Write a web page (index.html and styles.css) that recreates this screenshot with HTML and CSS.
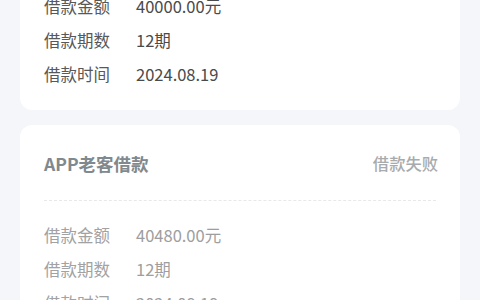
FILE: index.html
```html
<!DOCTYPE html>
<html lang="zh-CN">
<head>
    <meta charset="UTF-8">
    <meta name="viewport" content="width=device-width, initial-scale=1.0">
    <title>借款记录</title>
    <link rel="stylesheet" href="styles.css">
</head>
<body>
    <div class="list">
        <div class="card">
            <div class="card-head">
                <span class="card-title">APP借款</span>
                <span class="card-status">借款成功</span>
            </div>
            <div class="divider"></div>
            <div class="row"><span class="label">借款金额</span><span class="value">40000.00元</span></div>
            <div class="row"><span class="label">借款期数</span><span class="value">12期</span></div>
            <div class="row"><span class="label">借款时间</span><span class="value">2024.08.19</span></div>
        </div>

        <div class="card failed">
            <div class="card-head">
                <span class="card-title">APP老客借款</span>
                <span class="card-status">借款失败</span>
            </div>
            <div class="divider"></div>
            <div class="row"><span class="label">借款金额</span><span class="value">40480.00元</span></div>
            <div class="row"><span class="label">借款期数</span><span class="value">12期</span></div>
            <div class="row"><span class="label">借款时间</span><span class="value">2024.08.19</span></div>
        </div>
    </div>
</body>
</html>
```

FILE: styles.css
```css
body {
    margin: 0;
    background-color: #f4f6fa;
    font-family: "Noto Sans CJK SC", "Noto Sans", sans-serif;
    color: #555;
}
.list {
    display: flex;
    flex-direction: column;
    gap: 15px;
    padding: 0 20px;
    margin-top: -104px;
}
.card {
    background-color: #fff;
    border-radius: 12px;
    padding: 24px 24px 19px;
}
.card-head {
    display: flex;
    justify-content: space-between;
    align-items: center;
    height: 28px;
}
.card-title {
    font-size: 17.5px;
    font-weight: bold;
    color: #4a5257;
}
.card-status {
    font-size: 16.3px;
    font-weight: 500;
    color: #3a8f5c;
    margin-right: -2px;
}
.divider {
    margin: 23px 0 17px;
    border-top: 1px dashed #e6e8ea;
}
.row {
    display: flex;
    line-height: 34px;
    font-size: 16.5px;
}
.label {
    width: 92px;
    color: #585858;
}
.value {
    color: #4a4a4a;
}

/* 失败的记录整体变灰 */
.failed .card-title {
    color: #7f898e;
}
.failed .card-status {
    color: #a8abad;
}
.failed .label {
    color: #a2a2a2;
}
.failed .value {
    color: #9e9e9e;
}
```
